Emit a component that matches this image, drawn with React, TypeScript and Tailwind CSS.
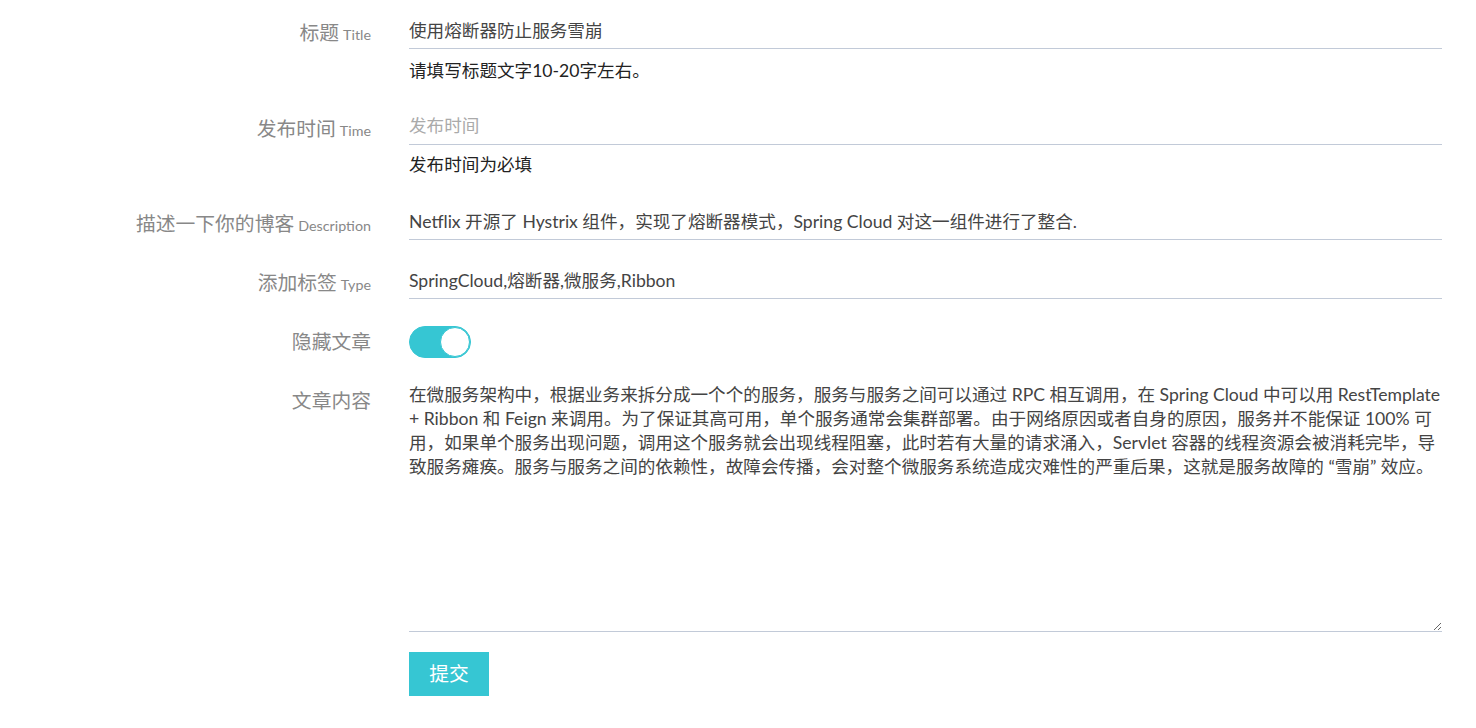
import { useState } from "react";

const content =
  "在微服务架构中，根据业务来拆分成一个个的服务，服务与服务之间可以通过 RPC 相互调用，在 Spring Cloud 中可以用 RestTemplate + Ribbon 和 Feign 来调用。为了保证其高可用，单个服务通常会集群部署。由于网络原因或者自身的原因，服务并不能保证 100% 可用，如果单个服务出现问题，调用这个服务就会出现线程阻塞，此时若有大量的请求涌入，Servlet 容器的线程资源会被消耗完毕，导致服务瘫痪。服务与服务之间的依赖性，故障会传播，会对整个微服务系统造成灾难性的严重后果，这就是服务故障的 “雪崩” 效应。";

function Label({ zh, en }: { zh: string; en?: string }) {
  return (
    <label className="pt-[9px] text-right text-[19.8px] leading-[27px] text-[#888]">
      {zh}
      {en && <span className="ml-1 text-[14.3px]">{en}</span>}
    </label>
  );
}

const inputCls =
  "h-[39px] w-full border-0 border-b border-[#c2cad8] bg-transparent px-0 text-[17.6px] text-[#444] outline-none placeholder:text-[#aaa]";

export default function App() {
  const [hidden, setHidden] = useState(true);

  return (
    <div
      className="min-h-screen bg-white pt-[10px]"
      style={{ fontFamily: '"Segoe UI", Lato, "Noto Sans CJK SC", sans-serif' }}
    >
      <form className="grid grid-cols-[371px_1fr] gap-x-[38px] gap-y-5 pr-[34px]">
        <Label zh="标题" en="Title" />
        <div className="pb-[2px]">
          <input className={inputCls} defaultValue="使用熔断器防止服务雪崩" />
          <p className="mt-[9px] text-[17.6px] leading-[26px] text-[#222]">请填写标题文字10-20字左右。</p>
        </div>

        <Label zh="发布时间" en="Time" />
        <div className="pb-[3px]">
          <input className={inputCls} placeholder="发布时间" />
          <p className="mt-[7px] text-[17.6px] leading-[26px] text-[#222]">发布时间为必填</p>
        </div>

        <Label zh="描述一下你的博客" en="Description" />
        <input
          className={inputCls}
          defaultValue="Netflix 开源了 Hystrix 组件，实现了熔断器模式，Spring Cloud 对这一组件进行了整合."
        />

        <Label zh="添加标签" en="Type" />
        <input className={inputCls} defaultValue="SpringCloud,熔断器,微服务,Ribbon" />

        <Label zh="隐藏文章" />
        <div className="flex h-[39px] items-center pt-[6px]">
          <button
            type="button"
            onClick={() => setHidden(!hidden)}
            className={`flex h-[32px] w-[62px] items-center rounded-full border ${
              hidden ? "justify-end border-[#36c6d3] bg-[#36c6d3]" : "justify-start border-[#ccc] bg-white"
            }`}
          >
            <span className="h-[30px] w-[30px] rounded-full border border-[#36c6d3] bg-white" />
          </button>
        </div>

        <Label zh="文章内容" />
        <textarea
          className="h-[254px] w-full border-0 border-b border-[#c2cad8] bg-transparent px-0 pt-[5px] text-[17.6px] leading-6 text-[#444] outline-none"
          defaultValue={content}
        />

        <div />
        <div>
          <button
            type="button"
            className="h-[44px] w-[80px] bg-[#36c6d3] text-[19.8px] text-white"
          >
            提交
          </button>
        </div>
      </form>
    </div>
  );
}
